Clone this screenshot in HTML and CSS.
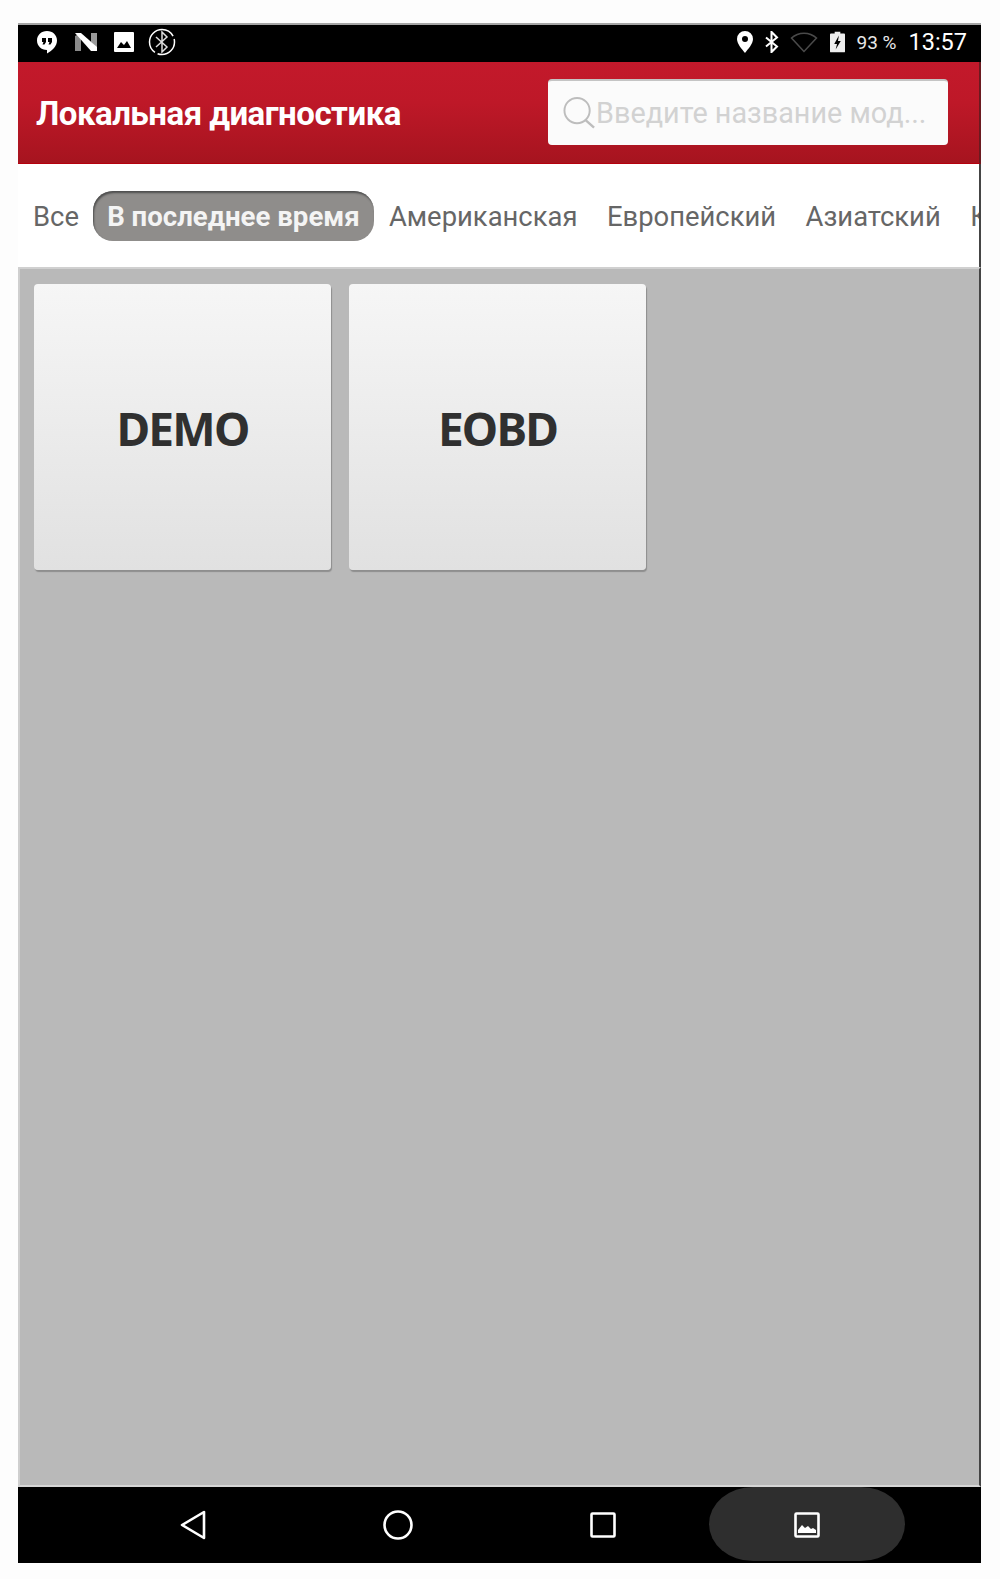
FILE: index.html
```html
<!DOCTYPE html>
<html lang="ru">
<head>
    <meta charset="UTF-8">
    <title>Локальная диагностика</title>
    <link rel="stylesheet" href="styles.css">
</head>
<body>

<div class="device">
    <!-- Status bar -->
    <div class="status-bar">
        <div class="status-left">
            <svg class="icon-chat" viewBox="0 0 22 24"><path fill="#fff" d="M11 1C5.200 1 1 5.200 1 10.500S5.200 20 11 20v3.500c5.500-3 10-7.500 10-13C21 5.200 16.800 1 11 1z"/><path fill="#000" d="M6 8h4v4l-1.500 2.500H6.500L7.500 12H6zM12 8h4v4l-1.500 2.500h-2l1-2.500H12z"/></svg>
            <svg class="icon-n" viewBox="0 0 24 20"><path fill="#8a8a8a" d="M1 19V4l6-3v18z"/><path fill="#9a9a9a" d="M17 1h6v15l-6-6z"/><path fill="#fff" d="M1 1h6l16 14v4h-6z"/></svg>
            <svg class="icon-image" viewBox="0 0 22 22"><path fill="#fff" d="M2 1h18a1 1 0 0 1 1 1v18a1 1 0 0 1-1 1H2a1 1 0 0 1-1-1V2a1 1 0 0 1 1-1z"/><path fill="#000" d="M4 17l4-6 3 3 3-4 4 7z"/></svg>
            <svg class="icon-bt-ring" viewBox="0 0 28 28"><circle cx="14" cy="14" r="12.500" fill="none" stroke="#fff" stroke-width="1.500" stroke-dasharray="24 3 45 3 3 3"/><path fill="none" stroke="#ddd" stroke-width="1.500" d="M8 9l11 10-5 5V4l5 5L8 19"/></svg>
        </div>
        <div class="status-right">
            <svg class="icon-pin" viewBox="0 0 16 22"><path fill="#fff" fill-rule="evenodd" d="M8 0a8 8 0 0 0-8 8c0 5 5 10 8 14 3-4 8-9 8-14a8 8 0 0 0-8-8zm0 5a3 3 0 1 1 0 6 3 3 0 0 1 0-6z"/></svg>
            <svg class="icon-bt" viewBox="0 0 16 24"><path fill="none" stroke="#fff" stroke-width="2.200" d="M2 7l12 10-6 6V1l6 6L2 17"/></svg>
            <svg class="icon-wifi" viewBox="0 0 28 22"><path fill="none" stroke="#4a4a4a" stroke-width="1.500" d="M14 20.500L1.500 7C8.500 .5 19.500 .5 26.500 7z"/></svg>
            <svg class="icon-battery" viewBox="0 0 16 22"><path fill="#eee" d="M5 0h6v2h4a1 1 0 0 1 1 1v18a1 1 0 0 1-1 1H1a1 1 0 0 1-1-1V3a1 1 0 0 1 1-1h4z"/><path fill="#000" d="M9.500 4L4.500 13h3L6 19l5.500-9h-3z"/></svg>
            <span class="battery-text">93 %</span>
            <span class="clock">13:57</span>
        </div>
    </div>

    <!-- Header -->
    <div class="app-header">
        <h1 class="app-title">Локальная диагностика</h1>
        <div class="search-box">
            <svg class="icon-search" viewBox="0 0 34 34"><circle cx="14.500" cy="14.500" r="13" fill="none" stroke="#bdbdbd" stroke-width="2"/><path stroke="#bdbdbd" stroke-width="2.500" d="M23 24l9 8"/></svg>
            <span class="search-text">Введите название мод...</span>
        </div>
    </div>

    <!-- Tabs -->
    <div class="tabs">
        <span class="tab tab-all">Все</span>
        <span class="tab tab-active">В последнее время</span>
        <span class="tab">Американская</span>
        <span class="tab">Европейский</span>
        <span class="tab">Азиатский</span>
        <span class="tab">К</span>
    </div>

    <!-- Car list -->
    <div class="content">
        <div class="card">DEMO</div>
        <div class="card">EOBD</div>
    </div>

    <!-- Navigation bar -->
    <div class="nav-bar">
        <div class="nav-item nav-back">
            <svg viewBox="0 0 26 30" width="26" height="30"><path fill="none" stroke="#fff" stroke-width="2.600" stroke-linejoin="round" d="M24 2v26L2 15z"/></svg>
        </div>
        <div class="nav-item nav-home">
            <svg viewBox="0 0 30 30" width="30" height="30"><circle cx="15" cy="15" r="13.500" fill="none" stroke="#fff" stroke-width="2.600"/></svg>
        </div>
        <div class="nav-item nav-recent">
            <svg viewBox="0 0 26 26" width="26" height="26"><rect x="1.500" y="1.500" width="23" height="23" rx="1" fill="none" stroke="#fff" stroke-width="2.600"/></svg>
        </div>
        <div class="nav-item nav-shot">
            <svg viewBox="0 0 26 26" width="26" height="26"><rect x="1.500" y="1.500" width="23" height="23" rx="1" fill="none" stroke="#fff" stroke-width="2.600"/><path fill="#fff" d="M4 21v-3l4-5 3 3 3-2 3 3 2-1 3 2v3z"/></svg>
        </div>
    </div>
</div>

</body>
</html>
```

FILE: styles.css
```css
body {
    margin: 0;
    height: 1579px;
    overflow: hidden;
    background-color: #fdfdfd;
    font-family: Roboto, "Liberation Sans", sans-serif;
    padding-top: 23px;
    padding-left: 18px;
    box-sizing: border-box;
}

.device {
    width: 963px;
    height: 1540px;
    display: flex;
    flex-direction: column;
}

/* Status bar */
.status-bar {
    height: 39px;
    flex-shrink: 0;
    box-sizing: border-box;
    background-color: #000;
    border-top: 2px solid #a5a5a5;
    display: flex;
    justify-content: space-between;
    align-items: center;
    padding: 0 14px 3px 18px;
    color: #fff;
}

.status-left,
.status-right {
    display: flex;
    align-items: center;
}

.icon-chat { width: 22px; height: 24px; }
.icon-n { width: 24px; height: 20px; margin-left: 16px; }
.icon-image { width: 22px; height: 22px; margin-left: 15px; }
.icon-bt-ring { width: 28px; height: 28px; margin-left: 13px; }

.icon-pin { width: 16px; height: 22px; }
.icon-bt { width: 15px; height: 22px; margin-left: 11px; }
.icon-wifi { width: 28px; height: 22px; margin-left: 11px; }
.icon-battery { width: 15px; height: 22px; margin-left: 12px; }

.battery-text {
    font-size: 19px;
    margin-left: 11px;
    color: #e8e8e8;
}

.clock {
    font-size: 23.500px;
    margin-left: 12px;
}

/* Header */
.app-header {
    height: 102px;
    flex-shrink: 0;
    box-sizing: border-box;
    background: linear-gradient(to bottom, #c3192b 0%, #be1828 40%, #a6141f 100%);
    border-bottom: 1px solid #b5000d;
    border-right: 2px solid #6b1a20;
    display: flex;
    justify-content: space-between;
    align-items: center;
    padding: 2px 31px 0 18px;
}

.app-title {
    margin: 0;
    color: #fff;
    font-size: 33px;
    font-weight: 700;
    letter-spacing: -0.500px;
}

.search-box {
    width: 400px;
    height: 66px;
    margin-bottom: 3px;
    box-sizing: border-box;
    background-color: #fbfbfb;
    border-top: 2px solid #c4c4c4;
    border-radius: 4px;
    display: flex;
    align-items: center;
    padding-left: 15px;
}

.icon-search {
    width: 33px;
    height: 34px;
    flex-shrink: 0;
}

.search-text {
    color: #d2d2d2;
    font-size: 28.800px;
    white-space: nowrap;
}

/* Tabs */
.tabs {
    height: 103px;
    flex-shrink: 0;
    background-color: #fff;
    display: flex;
    align-items: center;
    padding: 1px 0 0 15px;
    overflow: hidden;
    box-sizing: border-box;
    border-right: 2px solid #444;
}

.tab {
    flex-shrink: 0;
    color: #666;
    font-size: 27.400px;
    white-space: nowrap;
    margin-right: 29.500px;
    padding-top: 2px;
}

.tab-all {
    margin-right: 14px;
}

.tab-active {
    margin-right: 15px;
    padding-top: 0;
    width: 281px;
    height: 50px;
    line-height: 51px;
    box-sizing: border-box;
    background-color: #8f8d8b;
    box-shadow: inset 1px 2px 2px #4f4f4f;
    border-radius: 20px;
    color: #f4f4f4;
    font-size: 27.600px;
    font-weight: 700;
    text-align: center;
}

/* Car list */
.content {
    flex: 1;
    background-color: #b9b9b9;
    border-top: 2px solid #d0d0d0;
    border-left: 2px solid #cfcfcf;
    border-right: 2px solid #444;
    border-bottom: 2px solid #d5d5d5;
    box-sizing: border-box;
    display: flex;
    align-items: flex-start;
    gap: 18px;
    padding: 15px 14px;
}

.card {
    width: 297px;
    height: 286px;
    box-sizing: border-box;
    padding-top: 2px;
    background: linear-gradient(to bottom, #f6f6f6, #e1e1e1);
    border-radius: 4px;
    box-shadow: 1px 2px 1px #8e8e8e;
    display: flex;
    justify-content: center;
    align-items: center;
    color: #303030;
    font-size: 46px;
    font-weight: 700;
    font-family: "Noto Sans", sans-serif;
    letter-spacing: -1.800px;
}

/* Navigation bar */
.nav-bar {
    height: 76px;
    flex-shrink: 0;
    background-color: #000;
    display: flex;
    align-items: center;
    padding-left: 162px;
}

.nav-item {
    display: flex;
    justify-content: center;
    align-items: center;
}

.nav-back { width: 26px; }
.nav-home { width: 30px; margin-left: 177px; }
.nav-recent { width: 26px; margin-left: 177px; }

.nav-shot {
    width: 196px;
    height: 74px;
    margin-left: 93px;
    align-self: flex-start;
    padding-top: 2px;
    box-sizing: border-box;
    background-color: #2e2e2e;
    border-radius: 44px / 37px;
}
```
